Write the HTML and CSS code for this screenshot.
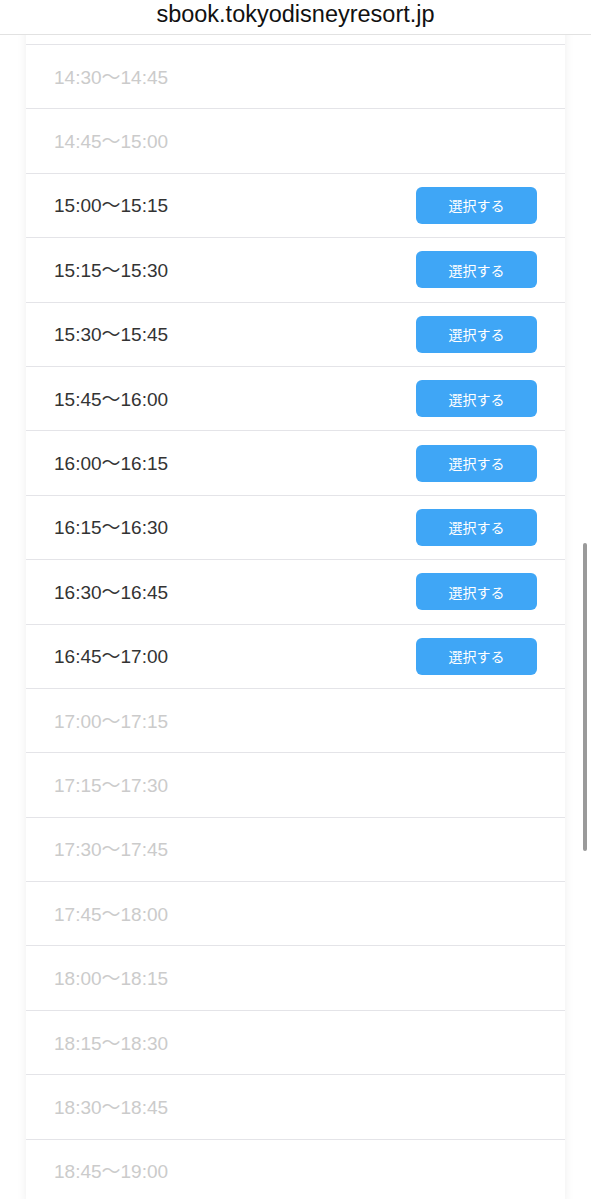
FILE: index.html
```html
<!DOCTYPE html>
<html>
    <head>
        <title>sbook.tokyodisneyresort.jp</title>
        <link rel="stylesheet" href="styles.css">
    </head>
    <body>
        <header class="urlBar">sbook.tokyodisneyresort.jp</header>
        <main class="viewport">
            <div class="card">
                <div class="row off"></div>
                <div class="row off"><span class="time">14:30〜14:45</span></div>
                <div class="row off"><span class="time">14:45〜15:00</span></div>
                <div class="row"><span class="time">15:00〜15:15</span><button class="selectBtn">選択する</button></div>
                <div class="row"><span class="time">15:15〜15:30</span><button class="selectBtn">選択する</button></div>
                <div class="row"><span class="time">15:30〜15:45</span><button class="selectBtn">選択する</button></div>
                <div class="row"><span class="time">15:45〜16:00</span><button class="selectBtn">選択する</button></div>
                <div class="row"><span class="time">16:00〜16:15</span><button class="selectBtn">選択する</button></div>
                <div class="row"><span class="time">16:15〜16:30</span><button class="selectBtn">選択する</button></div>
                <div class="row"><span class="time">16:30〜16:45</span><button class="selectBtn">選択する</button></div>
                <div class="row"><span class="time">16:45〜17:00</span><button class="selectBtn">選択する</button></div>
                <div class="row off"><span class="time">17:00〜17:15</span></div>
                <div class="row off"><span class="time">17:15〜17:30</span></div>
                <div class="row off"><span class="time">17:30〜17:45</span></div>
                <div class="row off"><span class="time">17:45〜18:00</span></div>
                <div class="row off"><span class="time">18:00〜18:15</span></div>
                <div class="row off"><span class="time">18:15〜18:30</span></div>
                <div class="row off"><span class="time">18:30〜18:45</span></div>
                <div class="row off"><span class="time">18:45〜19:00</span></div>
            </div>
            <div class="scrollThumb"></div>
        </main>
    </body>
</html>
```

FILE: styles.css
```css
body {
    margin: 0;
    background-color: #fff;
    font-family: "Liberation Sans", "Noto Sans CJK JP", sans-serif;
}

/* Browser address bar */
.urlBar {
    height: 35px;
    border-bottom: 1px solid #e2e2e2;
    display: flex;
    align-items: center;
    justify-content: center;
    font-size: 23.5px;
    color: #111;
    padding-bottom: 6px;
    box-sizing: border-box;
}

.viewport {
    position: relative;
    height: 1164px;
    overflow: hidden;
    padding: 0 26px 0 26px;
}

.card {
    margin-top: -54.4px;
    background-color: #fff;
    box-shadow: 0 0 10px rgba(0, 0, 0, 0.07);
}

.row {
    height: 63.4px;
    border-bottom: 1px solid #e4e4e8;
    display: flex;
    align-items: center;
    justify-content: space-between;
    padding: 0 28px;
    font-size: 19px;
    color: #333;
}

.row.off {
    color: #cbcbcb;
}

.time {
    margin-bottom: 3px;
}

.selectBtn {
    width: 121px;
    height: 37px;
    border: none;
    border-radius: 6px;
    background-color: #3fa6f6;
    color: #fff;
    font-family: "Noto Sans CJK JP", sans-serif;
    font-size: 14px;
    padding: 0;
}

.scrollThumb {
    position: absolute;
    top: 508px;
    right: 4px;
    width: 4px;
    height: 308px;
    border-radius: 2px;
    background-color: #9a9a9a;
}
```
